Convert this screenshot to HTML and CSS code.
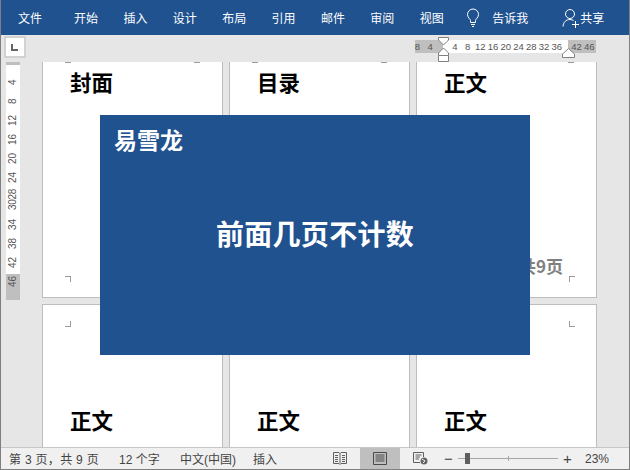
FILE: index.html
```html
<!DOCTYPE html>
<html lang="zh-CN">
<head>
    <meta charset="UTF-8">
    <title>前面几页不计数</title>
    <link rel="stylesheet" href="styles.css">
</head>
<body>

<div class="window">
    <header class="ribbon">
        <nav class="tabs">
            <span class="tab tab-file">文件</span>
            <span class="tab">开始</span>
            <span class="tab">插入</span>
            <span class="tab">设计</span>
            <span class="tab">布局</span>
            <span class="tab">引用</span>
            <span class="tab">邮件</span>
            <span class="tab">审阅</span>
            <span class="tab">视图</span>
        </nav>
        <div class="tell">
            <svg class="icon-bulb" width="14" height="20" viewBox="0 0 14 20" fill="none" stroke="#fff" stroke-width="1">
                <path d="M4.5 14.5V12.5C4.5 11 1.5 9.8 1.5 6.5A5.5 5.5 0 0 1 12.5 6.5C12.5 9.8 9.5 11 9.5 12.5V14.5Z"/>
                <path d="M5 16.5H9M6 18.5H8"/>
            </svg>
            <span>告诉我</span>
        </div>
        <div class="share">
            <svg width="18" height="20" viewBox="0 0 18 20" fill="none" stroke="#fff" stroke-width="1">
                <circle cx="8" cy="6" r="4.5"/>
                <path d="M1 18.5C1.5 14 4 11.5 8 11.5C9.5 11.5 10.5 12 11.5 12.5"/>
                <path d="M10 16.5H17M13.5 13V20"/>
            </svg>
            <span>共享</span>
        </div>
    </header>

    <main class="workspace">
        <div class="top-strip">
            <div class="corner"><svg width="8" height="7" viewBox="0 0 8 7"><path d="M0 0H2V5H7V7H0Z" fill="#666"/></svg></div>
            <div class="h-ruler">
                <span>8</span><span>4</span><span class="gap"></span><span>4</span><span>8</span><span>12</span><span>16</span><span>20</span><span>24</span><span>28</span><span>32</span><span>36</span><span class="gap-end"></span><span>42</span><span>46</span>
                <svg class="indent-left" width="14" height="25" viewBox="0 0 14 25" fill="#fff" stroke="#808080">
                    <path d="M1.5 .5H11.5V3L6.500 8L1.500 3Z"/>
                    <path d="M6.500 11L11.500 16V18.500H1.500V16Z"/>
                    <path d="M1.500 18.500H11.500V24.500H1.500Z"/>
                </svg>
                <svg class="indent-right" width="14" height="10" viewBox="0 0 14 10" fill="#fff" stroke="#808080">
                    <path d="M6.500 .5L12.500 6V9.500H.5V6Z"/>
                </svg>
            </div>
        </div>
        <div class="doc-row">
            <div class="v-ruler">
                <div class="v-white">
                    <span>4</span><span>8</span><span>12</span><span>16</span><span>20</span><span>24</span><span class="wide">3028</span><span>34</span><span>38</span><span>42</span>
                </div>
                <div class="v-gray"><span>46</span></div>
            </div>
            <div class="pages">
                <section class="page">
                    <h2 class="page-title">封面</h2>
                    <i class="crop crop-top-l"></i><i class="crop crop-top-r"></i>
                    <i class="crop crop-bl"></i>
                </section>
                <section class="page">
                    <h2 class="page-title">目录</h2>
                    <i class="crop crop-top-l"></i><i class="crop crop-top-r"></i>
                </section>
                <section class="page">
                    <h2 class="page-title">正文</h2>
                    <i class="crop crop-top-r"></i>
                    <i class="crop crop-br"></i>
                    <span class="page-count">共9页</span>
                </section>
                <section class="page page-low">
                    <i class="crop crop-tl"></i>
                    <h2 class="page-title">正文</h2>
                </section>
                <section class="page page-low">
                    <h2 class="page-title">正文</h2>
                </section>
                <section class="page page-low">
                    <i class="crop crop-tr"></i>
                    <h2 class="page-title">正文</h2>
                </section>
            </div>
        </div>

        <div class="banner">
            <div class="banner-logo">易雪龙</div>
            <div class="banner-text">前面几页不计数</div>
        </div>
    </main>

    <footer class="status">
        <span class="st-page">第 3 页，共 9 页</span>
        <span class="st-words">12 个字</span>
        <span class="st-lang">中文(中国)</span>
        <span class="st-mode">插入</span>
        <div class="views">
            <span class="view">
                <svg width="14" height="13" viewBox="0 0 14 13" fill="none" stroke="#5f5f5f">
                    <path d="M.5 .5H6L7 1.500L8 .5H13.500V11.500H8L7 12.500L6 11.500H.5ZM7 1.500V11.500M2 3.500H5M2 5.500H5M2 7.500H5M2 9.500H5M9 3.500H12M9 5.500H12M9 7.500H12M9 9.500H12"/>
                </svg>
            </span>
            <span class="view view-on">
                <svg width="14" height="13" viewBox="0 0 14 13" fill="none" stroke="#4a4a4a">
                    <path d="M.5 .5H13.500V12.500H.5ZM2.500 3H11.500M2.500 5H11.500M2.500 7H11.500M2.500 9H11.500"/>
                </svg>
            </span>
            <span class="view">
                <svg width="15" height="13" viewBox="0 0 15 13" fill="none" stroke="#5f5f5f">
                    <path d="M7 10.500H.5V.5H10.500V5M2.500 3H8.500M2.500 5H7M2.500 7H6"/>
                    <circle cx="11" cy="9" r="3.500" fill="#666" stroke="none"/>
                    <path d="M9 7L12 9L10 11" stroke="#eee"/>
                </svg>
            </span>
        </div>
        <div class="zoom">
            <span class="zoom-btn">−</span>
            <div class="slider"><i class="thumb"></i><i class="mid"></i></div>
            <span class="zoom-btn">+</span>
        </div>
        <span class="st-pct">23%</span>
    </footer>
</div>

</body>
</html>
```

FILE: styles.css
```css
* {
    box-sizing: border-box;
}
body {
    margin: 0;
    font-family: "Liberation Sans", "Noto Sans CJK SC", sans-serif;
    background: #e6e6e6;
}
.window {
    width: 630px;
    height: 470px;
    display: flex;
    flex-direction: column;
    border-left: 1px solid #7f7f7f;
    border-right: 1px solid #7f7f7f;
    border-bottom: 1px solid #7f7f7f;
    overflow: hidden;
}

/* ribbon */
.ribbon {
    height: 35px;
    flex: none;
    background: #20528f;
    color: #fff;
    display: flex;
    align-items: center;
    font-size: 12px;
    font-family: "Noto Sans CJK SC", sans-serif;
}
.tabs {
    display: flex;
    padding-left: 17px;
}
.tab {
    width: 24px;
    margin-right: 25.4px;
    white-space: nowrap;
}
.tab-file {
    margin-right: 32px;
}
.tell {
    display: flex;
    align-items: center;
    gap: 12px;
    margin-left: -3px;
}
.icon-bulb {
    margin-top: 1px;
}
.share {
    display: flex;
    align-items: center;
    margin-left: 34px;
}

/* rulers */
.workspace {
    flex: 1;
    position: relative;
    display: flex;
    flex-direction: column;
    min-height: 0;
    background: #e6e6e6;
}
.top-strip {
    height: 27px;
    flex: none;
    display: flex;
    position: relative;
}
.corner {
    width: 22px;
    height: 22px;
    margin: 1px 0 0 3px;
    border: 2px solid #d2d2d2;
    background: #fff;
    display: flex;
    align-items: center;
    justify-content: center;
}
.h-ruler {
    position: absolute;
    left: 414px;
    top: 5px;
    width: 181px;
    height: 13px;
    display: flex;
    font-size: 9.5px;
    line-height: 13px;
    color: #555;
    background: linear-gradient(to right, #bfbfbf 28px, #fff 28px, #fff 153px, #bfbfbf 153px);
}
.h-ruler span {
    width: 12.75px;
    flex: none;
    text-align: center;
    white-space: nowrap;
}
.h-ruler .gap {
    width: 12px;
}
.h-ruler span:first-child {
    margin-left: -4px;
}
.h-ruler .gap-end {
    width: 7px;
}
.indent-left {
    position: absolute;
    left: 22px;
    top: -3px;
}
.indent-right {
    position: absolute;
    left: 147px;
    top: 8px;
}
.doc-row {
    flex: 1;
    display: flex;
    min-height: 0;
}
.v-ruler {
    width: 14px;
    flex: none;
    margin-left: 5px;
    height: 238px;
    border-top: 3px solid #bfbfbf;
    font-size: 10px;
    color: #555;
    display: flex;
    flex-direction: column;
}
.v-white {
    height: 209px;
    background: #fff;
    padding-top: 8px;
    display: flex;
    flex-direction: column;
    align-items: center;
}
.v-white span, .v-gray span {
    height: 19px;
    line-height: 14px;
    writing-mode: vertical-rl;
    transform: rotate(180deg);
    text-align: center;
}
.v-white .wide {
    height: 28px;
    padding-top: 3px;
    letter-spacing: -.3px;
}
.v-gray {
    flex: 1;
    background: #bfbfbf;
    display: flex;
    justify-content: center;
}
.v-gray span {
    height: 15px;
}

/* pages */
.pages {
    margin-left: 22px;
    width: 555px;
    height: 385px;
    display: grid;
    grid-template-columns: 181px 181px 181px;
    grid-template-rows: 236px 143px;
    column-gap: 6px;
    row-gap: 6px;
}
.page {
    position: relative;
    background: #fff;
    border-left: 1px solid #bdbdbd;
    border-right: 1px solid #bdbdbd;
    border-bottom: 1px solid #bdbdbd;
    padding: 5px 0 0 27px;
    overflow: hidden;
}
.page-low {
    border-top: 1px solid #bdbdbd;
    border-bottom: 0;
    padding-top: 100px;
}
.page-title {
    margin: 0;
    font-size: 21.5px;
    line-height: 30px;
    font-weight: 700;
    color: #000;
    font-family: "Noto Sans CJK SC", sans-serif;
}
.crop {
    position: absolute;
    width: 6px;
    height: 6px;
    border: 0 solid #9a9a9a;
}
.crop-top-l {
    left: 22px;
    top: 0;
    height: 1px;
    border-top-width: 1px;
}
.crop-top-r {
    right: 22px;
    top: 0;
    height: 1px;
    border-top-width: 1px;
}
.crop-bl {
    left: 22px;
    bottom: 15px;
    border-top-width: 1px;
    border-right-width: 1px;
}
.crop-br {
    right: 21px;
    bottom: 15px;
    border-top-width: 1px;
    border-left-width: 1px;
}
.crop-tl {
    left: 22px;
    top: 16px;
    border-bottom-width: 1px;
    border-right-width: 1px;
}
.crop-tr {
    right: 21px;
    top: 16px;
    border-bottom-width: 1px;
    border-left-width: 1px;
}
.page-count {
    position: absolute;
    right: 33px;
    bottom: 20px;
    font-size: 17px;
    line-height: 22px;
    font-weight: 700;
    color: #808080;
    font-family: "Noto Sans CJK SC", sans-serif;
}

/* blue slide over the document */
.banner {
    position: absolute;
    left: 99px;
    top: 80px;
    width: 430px;
    height: 240px;
    background: #20528f;
    color: #fff;
    font-family: "Noto Sans CJK SC", sans-serif;
    font-weight: 700;
}
.banner-logo {
    margin: 8px 0 0 14px;
    font-size: 23px;
    line-height: 32px;
}
.banner-text {
    margin-top: 58px;
    text-align: center;
    font-size: 28px;
    line-height: 40px;
    letter-spacing: .3px;
}

/* status bar */
.status {
    height: 22px;
    flex: none;
    position: relative;
    display: flex;
    align-items: center;
    background: #f0f0f0;
    border-top: 1px solid #c6c6c6;
    font-size: 12px;
    color: #444;
}
.st-page {
    margin-left: 8px;
    width: 110px;
    letter-spacing: .3px;
}
.st-words {
    width: 61px;
}
.st-lang {
    width: 73px;
}
.st-mode {
    width: 67px;
}
.views {
    display: flex;
    height: 21px;
    align-items: center;
}
.view {
    width: 40px;
    height: 21px;
    display: flex;
    align-items: center;
    justify-content: center;
}
.view-on {
    background: #bfbfbf;
}
.zoom {
    display: flex;
    align-items: center;
    gap: 5px;
    margin-left: 4px;
}
.zoom-btn {
    width: 9px;
    text-align: center;
    font-size: 15px;
    line-height: 15px;
    color: #444;
}
.slider {
    position: relative;
    width: 100px;
    height: 1px;
    background: #a6a6a6;
}
.thumb {
    position: absolute;
    left: 7px;
    top: -5px;
    width: 5px;
    height: 11px;
    background: #5f5f5f;
}
.mid {
    position: absolute;
    left: 50px;
    top: -2px;
    width: 1px;
    height: 5px;
    background: #a6a6a6;
}
.st-pct {
    margin-left: 13px;
}
```
